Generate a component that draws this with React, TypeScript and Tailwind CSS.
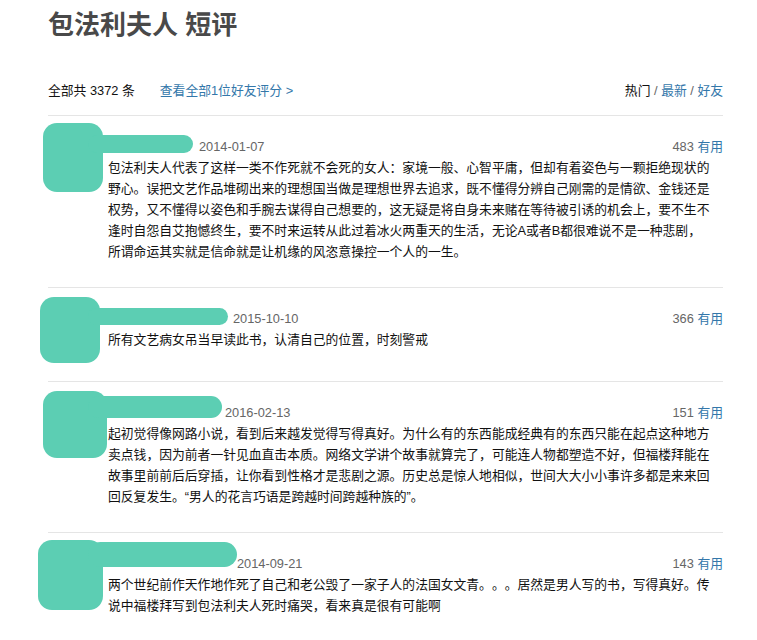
import React from "react";

// redaction stroke over avatar + username, coordinates in page x / item y
interface Blob {
  sq: [number, number, number, number];
  bar: [number, number, number, number];
}

interface Comment {
  date: string;
  votes: number;
  nameW: string;
  text: string;
  blob: Blob;
}

const comments: Comment[] = [
  {
    date: "2014-01-07",
    votes: 483,
    nameW: "w-[91px]",
    text: "包法利夫人代表了这样一类不作死就不会死的女人：家境一般、心智平庸，但却有着姿色与一颗拒绝现状的野心。误把文艺作品堆砌出来的理想国当做是理想世界去追求，既不懂得分辨自己刚需的是情欲、金钱还是权势，又不懂得以姿色和手腕去谋得自己想要的，这无疑是将自身未来赌在等待被引诱的机会上，要不生不逢时自怨自艾抱憾终生，要不时来运转从此过着冰火两重天的生活，无论A或者B都很难说不是一种悲剧，所谓命运其实就是信命就是让机缘的风恣意操控一个人的一生。",
    blob: { sq: [43, 7, 60, 69], bar: [88, 19, 105, 18] },
  },
  {
    date: "2015-10-10",
    votes: 366,
    nameW: "w-[125px]",
    text: "所有文艺病女吊当早读此书，认清自己的位置，时刻警戒",
    blob: { sq: [40, 9, 60, 66], bar: [88, 20, 140, 17] },
  },
  {
    date: "2016-02-13",
    votes: 151,
    nameW: "w-[117px]",
    text: "起初觉得像网路小说，看到后来越发觉得写得真好。为什么有的东西能成经典有的东西只能在起点这种地方卖点钱，因为前者一针见血直击本质。网络文学讲个故事就算完了，可能连人物都塑造不好，但福楼拜能在故事里前前后后穿插，让你看到性格才是悲剧之源。历史总是惊人地相似，世间大大小小事许多都是来来回回反复发生。“男人的花言巧语是跨越时间跨越种族的”。",
    blob: { sq: [43, 9, 64, 67], bar: [88, 14, 134, 22] },
  },
  {
    date: "2014-09-21",
    votes: 143,
    nameW: "w-[129px]",
    text: "两个世纪前作天作地作死了自己和老公毁了一家子人的法国女文青。。。居然是男人写的书，写得真好。传说中福楼拜写到包法利夫人死时痛哭，看来真是很有可能啊",
    blob: { sq: [38, 7, 65, 70], bar: [88, 9, 149, 25] },
  },
];

const Redaction = ({ blob }: { blob: Blob }) => (
  <svg
    className="absolute -left-12 top-0 pointer-events-none"
    width={260}
    height={90}
    viewBox="0 0 260 90"
  >
    <defs>
      <filter id="soft" x="-10%" y="-10%" width="120%" height="120%">
        <feGaussianBlur stdDeviation="0.7" />
      </filter>
    </defs>
    <g fill="#5bceb3" filter="url(#soft)">
      <rect
        x={blob.sq[0]}
        y={blob.sq[1]}
        width={blob.sq[2]}
        height={blob.sq[3]}
        rx={14}
      />
      <rect
        x={blob.bar[0]}
        y={blob.bar[1]}
        width={blob.bar[2]}
        height={blob.bar[3]}
        rx={blob.bar[3] / 2}
      />
    </g>
  </svg>
);

const CommentItem = ({ c }: { c: Comment }) => (
  <div className="relative flex border-t border-[#e5e5e5] pt-5 pb-[25px]">
    <div className="w-12 h-12 shrink-0"></div>
    <div className="flex-1 ml-3">
      <div className="flex justify-between leading-[21px]">
        <div className="flex">
          <span className={`inline-block ${c.nameW}`}></span>
          <span className="text-[#666]">{c.date}</span>
        </div>
        <div>
          <span className="text-[#666]">{c.votes}</span>{" "}
          <span className="text-[#37a]">有用</span>
        </div>
      </div>
      <p className="w-[603px] leading-[21px] text-[#111] [text-spacing-trim:space-all]">
        {c.text}
      </p>
    </div>
    <Redaction blob={c.blob} />
  </div>
);

const App = () => {
  return (
    <div
      className="w-[757px] h-[640px] overflow-hidden bg-white text-[12.8px]"
      style={{ fontFamily: '"Liberation Sans", "Noto Sans CJK SC", sans-serif' }}
    >
      <div className="pl-12 pr-[34px]">
        <h1 className="pt-[10px] text-[26px] leading-[30px] font-bold text-[#494949]">
          包法利夫人 短评
        </h1>

        <div className="mt-[40px] flex justify-between items-center leading-[21px]">
          <div className="flex">
            <span className="text-[#111]">全部共 3372 条</span>
            <span className="ml-[25px] text-[#37a]">查看全部1位好友评分 &gt;</span>
          </div>
          <div className="text-[#111]">
            热门 <span className="text-[#666]">/</span>{" "}
            <span className="text-[#37a]">最新</span>{" "}
            <span className="text-[#666]">/</span>{" "}
            <span className="text-[#37a]">好友</span>
          </div>
        </div>

        <div className="mt-[14px]">
          {comments.map((c) => (
            <CommentItem key={c.date} c={c} />
          ))}
        </div>
      </div>
    </div>
  );
};

export default App;
